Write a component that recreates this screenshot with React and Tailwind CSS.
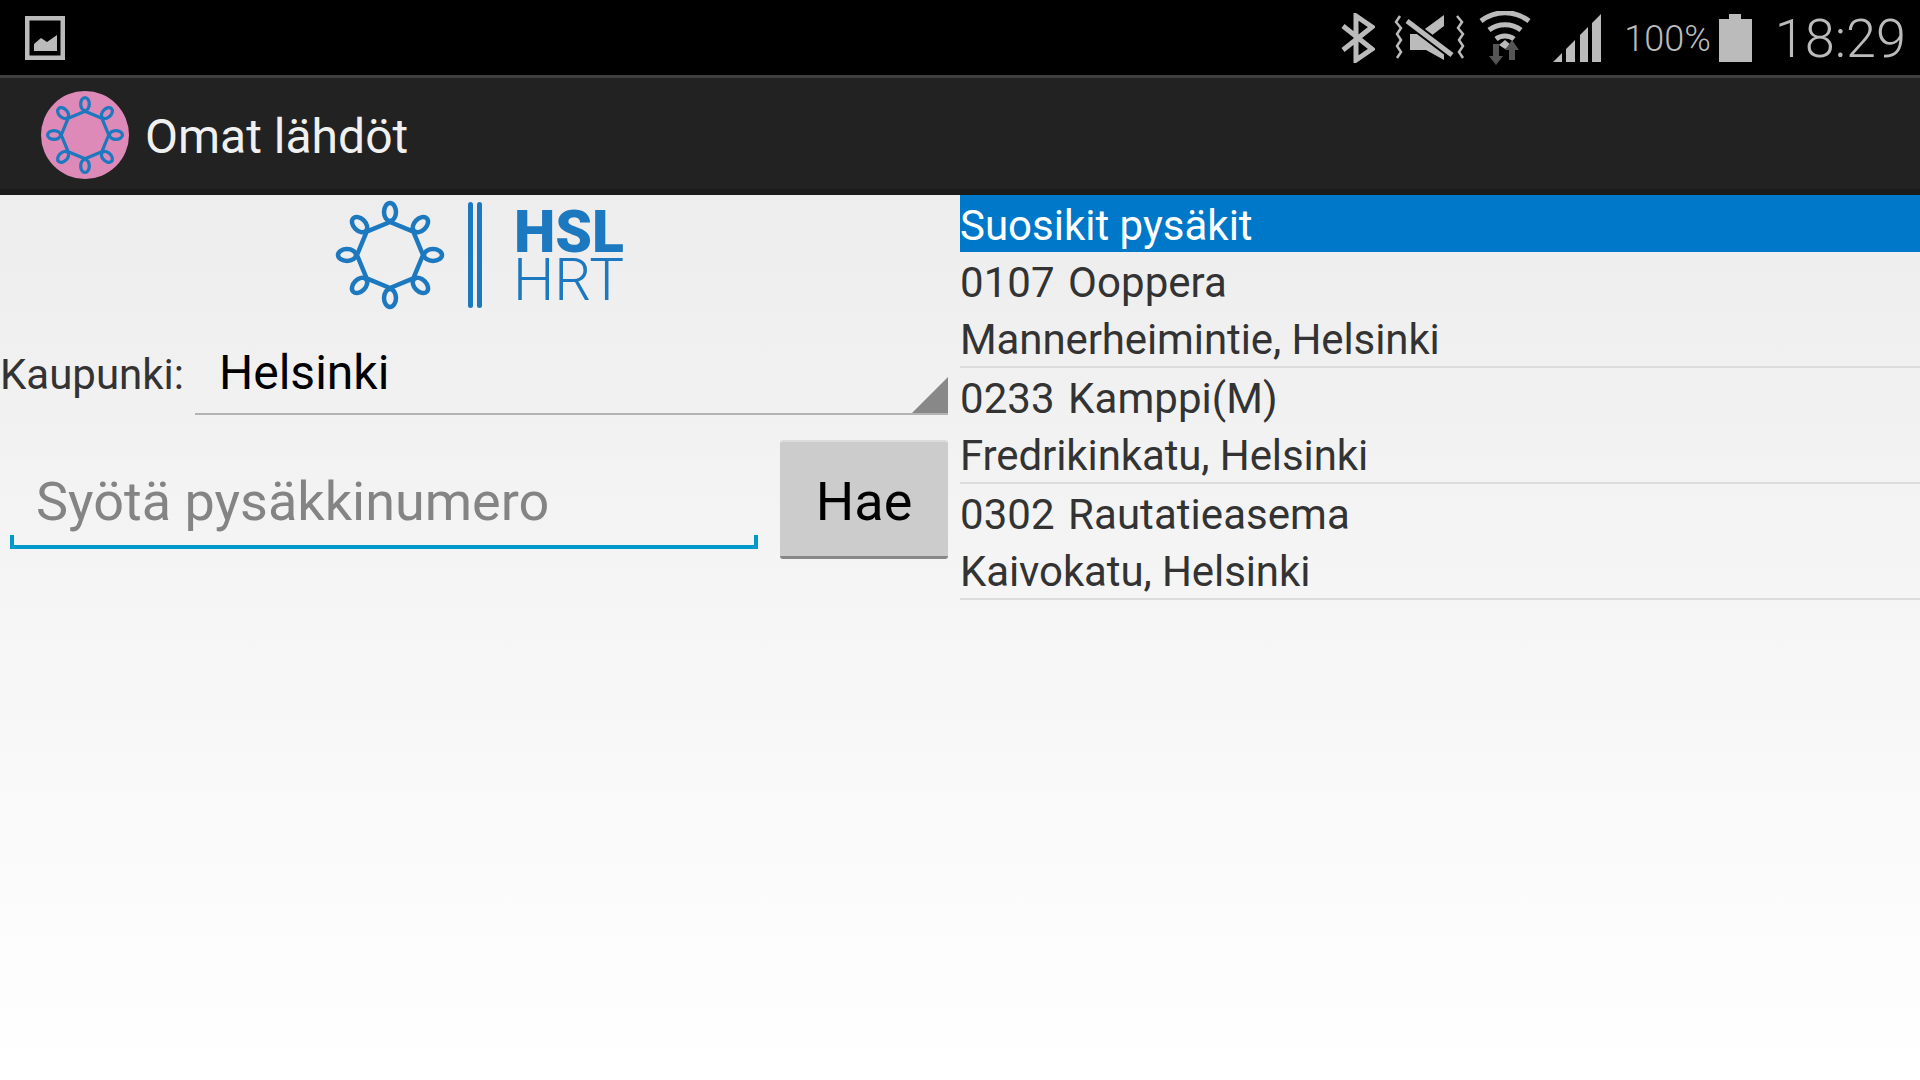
import React from "react";

const stops = [
  { id: "0107 Ooppera", street: "Mannerheimintie, Helsinki" },
  { id: "0233 Kamppi(M)", street: "Fredrikinkatu, Helsinki" },
  { id: "0302 Rautatieasema", street: "Kaivokatu, Helsinki" },
];

// HSL flower mark, drawn around 0,0 with radius about 53
const Flower = ({ color = "#1c78bf", width = 3.5 }) => {
  const angles = [0, 45, 90, 135, 180, 225, 270, 315];
  const points = angles
    .map((a) => {
      const r = (a * Math.PI) / 180;
      return `${33 * Math.sin(r)},${-33 * Math.cos(r)}`;
    })
    .join(" ");
  return (
    <g fill="none" stroke={color} strokeWidth={width}>
      <polygon points={points} strokeLinejoin="round" />
      {angles.map((a) => (
        <ellipse key={a} cx="0" cy="-43" rx="6" ry="9" transform={`rotate(${a})`} />
      ))}
    </g>
  );
};

const StatusIcons = () => (
  <>
    {/* bluetooth */}
    <svg width="34" height="50" viewBox="0 0 34 50" className="shrink-0">
      <path d="M2 13 L31 36 L15 47 V3 L31 14 L2 37" fill="none" stroke="#bbb" strokeWidth="5" />
    </svg>
    {/* muted, vibrate */}
    <svg width="72" height="48" viewBox="0 0 72 48" className="ml-[19px] shrink-0">
      <g fill="none" stroke="#bbb" strokeWidth="2.5">
        <path d="M6 2 L2 8 L7 14 L3 20 L7 26 L3 32 L7 38 L3 44" />
        <path d="M63 2 L68 8 L64 14 L69 20 L65 26 L69 32 L65 38 L69 44" />
      </g>
      <path d="M16 20 H24 L50 1 V12 L37 22 L50 34 V46 L32 36 H16 Z" fill="#bbb" />
      <path d="M13 7 L58 41" fill="none" stroke="#000" strokeWidth="9" />
      <path d="M13 7 L58 41" fill="none" stroke="#bbb" strokeWidth="5" />
    </svg>
    {/* wifi with data arrows */}
    <svg width="52" height="54" viewBox="0 0 52 54" className="ml-[13px] shrink-0">
      <g fill="none" stroke="#bbb" strokeWidth="5">
        <path d="M2 10 C16 -1 36 -1 50 10" />
        <path d="M10 19 C19 12 33 12 42 19" />
        <path d="M17 28 C22 24 30 24 35 28" />
      </g>
      <path d="M26 29 L32 34 L26 38 L20 34 Z" fill="#bbb" />
      <path d="M17 54 L10 45 H14 V33 H20 V45 H24 Z" fill="#555" />
      <path d="M33 29 L40 39 H36 V49 H30 V39 H26 Z" fill="#555" />
    </svg>
    {/* signal */}
    <svg width="48" height="48" viewBox="0 0 48 48" className="ml-[22px] shrink-0">
      <path
        d="M0 48 L9 39 V48 Z M13 48 V35 L22 26 V48 Z M27 48 V21 L35 13 V48 Z M39 48 V9 L48 0 V48 Z"
        fill="#bbb"
      />
    </svg>
  </>
);

export default function App() {
  return (
    <div className="min-h-[1080px] flex flex-col font-['Roboto',sans-serif] overflow-hidden">
      {/* status bar */}
      <div className="h-[78px] shrink-0 bg-black border-b-[3px] border-[#3f3f3f] flex items-center pl-[25px] pr-[14px] text-[#bbb]">
        <svg width="40" height="44" viewBox="0 0 40 44" className="shrink-0">
          <path d="M2 2 H38 V42 H2 Z" fill="none" stroke="#bbb" strokeWidth="5" />
          <path d="M9 35 V28 L16 22 L22 26 L32 19 V35 Z" fill="#bbb" />
        </svg>
        <div className="ml-auto flex items-center">
          <StatusIcons />
          <span className="ml-[23px] pt-[3px] text-[36px] font-light leading-none">100%</span>
          <div className="ml-[8px] flex flex-col items-center shrink-0">
            <div className="w-[12px] h-[5px] bg-[#bbb]" />
            <div className="w-[33px] h-[43px] bg-[#bbb]" />
          </div>
          <span className="ml-[23px] pt-[2px] text-[54px] font-light leading-none">18:29</span>
        </div>
      </div>

      {/* action bar */}
      <div className="h-[117px] shrink-0 bg-[#222222] flex items-center pl-[41px] border-b-[6px] border-[#1a1a1a]">
        <svg width="88" height="88" viewBox="-44 -44 88 88" className="shrink-0 mt-[3px]">
          <circle cx="0" cy="0" r="44" fill="#de8ab8" />
          <g transform="scale(0.72)">
            <Flower width={4.5} />
          </g>
        </svg>
        <h1 className="ml-[16px] text-[48px] leading-none text-[#f0f0f0] font-normal mt-[6px]">Omat lähdöt</h1>
      </div>

      {/* content */}
      <div className="flex-1 flex bg-gradient-to-b from-[#ededed] to-white">
        <div className="w-[948px] shrink-0">
          {/* logo */}
          <div className="h-[120px] flex justify-center">
            <svg width="300" height="120" viewBox="330 195 300 120" className="ml-[12px]">
              <g transform="translate(390 255)">
                <Flower width={4.5} />
              </g>
              <rect x="468" y="202" width="5" height="106" rx="2.5" fill="#1c78bf" />
              <rect x="477" y="202" width="5" height="106" rx="2.5" fill="#1c78bf" />
              <text x="514" y="252" fontSize="59" fontWeight="900" fill="#1c78bf" textLength="110" lengthAdjust="spacingAndGlyphs">
                HSL
              </text>
              <text x="513" y="300" fontSize="59" fontWeight="300" fill="#1c78bf" textLength="111" lengthAdjust="spacingAndGlyphs">
                HRT
              </text>
            </svg>
          </div>

          {/* city spinner */}
          <div className="flex items-end h-[100px]">
            <span className="w-[195px] shrink-0 pb-[16px] text-[42px] leading-[48px] text-[#333]">Kaupunki:</span>
            <div className="relative flex-1 h-[100px] border-b-[2px] border-[#b3b3b3]">
              <span className="absolute left-[24px] top-[30px] text-[48px] leading-[56px] text-black">Helsinki</span>
              <div className="absolute right-0 bottom-0 w-[36px] h-[36px] bg-[#888] [clip-path:polygon(100%_0,100%_100%,0_100%)]" />
            </div>
          </div>

          {/* search */}
          <div className="flex mt-[25px] items-start">
            <div className="relative w-[748px] ml-[10px] h-[109px]">
              <input
                readOnly
                placeholder="Syötä pysäkkinumero"
                className="w-full h-[105px] pl-[26px] pt-[18px] text-[54px] bg-transparent outline-none placeholder:text-[#848484]"
              />
              <div className="absolute left-0 right-0 bottom-0 h-[14px] border-x-[4px] border-b-[4px] border-[#0099cc]" />
            </div>
            <button className="ml-[22px] w-[168px] h-[119px] pt-[4px] bg-[#cccccc] rounded-[3px] border-t-[2px] border-[#dcdcdc] border-b-[3px] border-b-[#888] text-[54px] text-black">
              Hae
            </button>
          </div>
        </div>

        {/* favourites list */}
        <div className="flex-1 ml-[12px] text-[42px] leading-[57px] text-[#333]">
          <div className="h-[57px] pt-[2px] bg-[#0078c9] text-white">Suosikit pysäkit</div>
          {stops.map((stop) => (
            <div key={stop.id} className="h-[116px] pt-[2px] border-b-[2px] border-[#dcdcdc]">
              <div className="[word-spacing:3px] tracking-[0.05px] h-[57px]">{stop.id}</div>
              <div className="tracking-[-0.1px] h-[55px]">{stop.street}</div>
            </div>
          ))}
        </div>
      </div>
    </div>
  );
}
